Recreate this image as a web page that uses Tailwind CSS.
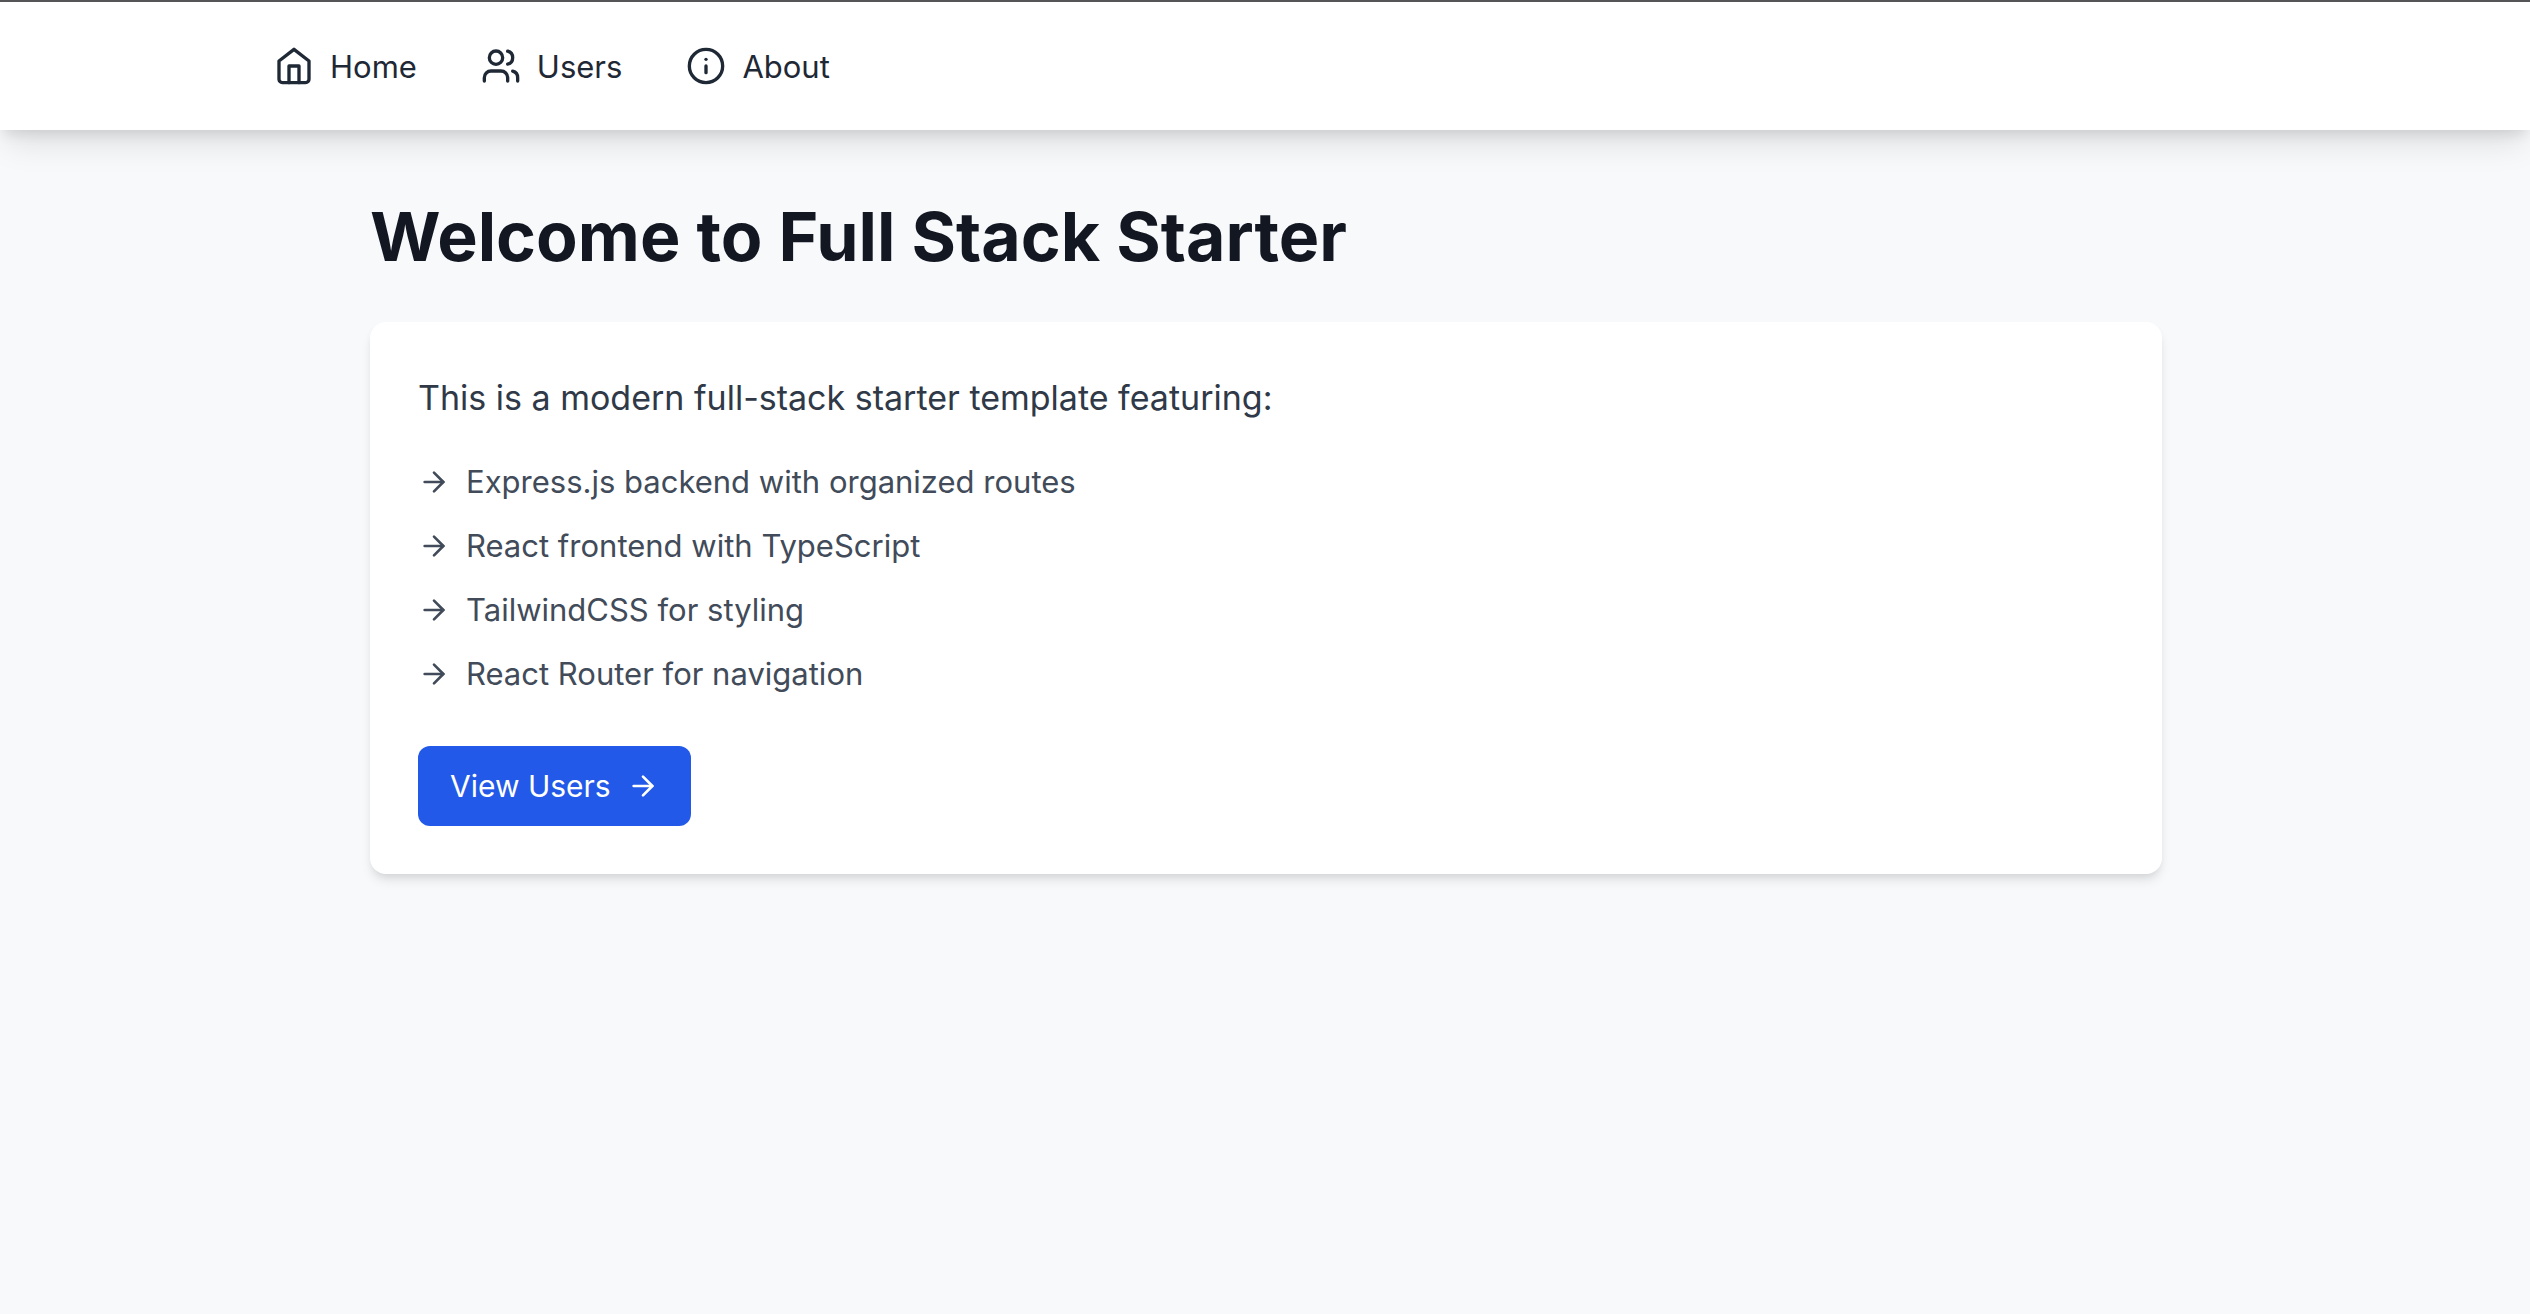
<!DOCTYPE html>
<html lang="en">
<head>
<meta charset="utf-8">
<title>Full Stack Starter</title>
<script src="https://cdn.jsdelivr.net/npm/@tailwindcss/browser@4"></script>
</head>
<body class="min-h-screen border-t-2 border-[#555456] bg-[#f8f9fb] font-['Inter',sans-serif] text-[31px] leading-[48px]">
<nav class="bg-white shadow-[0_20px_30px_-6px_rgb(0_0_0/0.1),0_8px_12px_-4px_rgb(0_0_0/0.1)]">
  <div class="mx-auto flex h-32 max-w-[2050px] items-center gap-16 pr-8 pl-[34px] text-[#1f2835]">
    <a href="#" class="flex items-center gap-4">
      <svg class="size-10" viewBox="0 0 24 24" fill="none" stroke="currentColor" stroke-width="2" stroke-linecap="round" stroke-linejoin="round"><path d="m3 9 9-7 9 7v11a2 2 0 0 1-2 2H5a2 2 0 0 1-2-2z"/><path d="M9 22V12h6v10"/></svg>
      <span class="pt-0.5">Home</span>
    </a>
    <a href="#" class="flex items-center gap-4">
      <svg class="size-10" viewBox="0 0 24 24" fill="none" stroke="currentColor" stroke-width="2" stroke-linecap="round" stroke-linejoin="round"><path d="M16 21v-2a4 4 0 0 0-4-4H6a4 4 0 0 0-4 4v2"/><circle cx="9" cy="7" r="4"/><path d="M22 21v-2a4 4 0 0 0-3-3.87"/><path d="M16 3.13a4 4 0 0 1 0 7.75"/></svg>
      <span class="pt-0.5">Users</span>
    </a>
    <a href="#" class="flex items-center gap-4">
      <svg class="size-10" viewBox="0 0 24 24" fill="none" stroke="currentColor" stroke-width="2" stroke-linecap="round" stroke-linejoin="round"><circle cx="12" cy="12" r="10"/><path d="M12 16v-4"/><path d="M12 8h.01"/></svg>
      <span class="pt-0.5">About</span>
    </a>
  </div>
</nav>
<main class="mx-auto max-w-[1794px] py-16 pl-0.5">
  <h1 class="mb-11 text-[68px] leading-[84px] font-bold text-[#131722]">Welcome to Full Stack Starter</h1>
  <div class="rounded-2xl bg-white p-12 shadow-[0_8px_12px_-2px_rgb(0_0_0/0.1),0_4px_8px_-4px_rgb(0_0_0/0.1)]">
    <p class="mb-8 text-[34px] leading-[56px] text-[#2f3947]">This is a modern full-stack starter template featuring:</p>
    <ul class="mb-12 flex flex-col gap-4 text-[#414b59]">
      <li class="flex items-center gap-4"><svg class="size-8" viewBox="0 0 24 24" fill="none" stroke="currentColor" stroke-width="2" stroke-linecap="round" stroke-linejoin="round"><path d="M5 12h14"/><path d="m12 5 7 7-7 7"/></svg>Express.js backend with organized routes</li>
      <li class="flex items-center gap-4"><svg class="size-8" viewBox="0 0 24 24" fill="none" stroke="currentColor" stroke-width="2" stroke-linecap="round" stroke-linejoin="round"><path d="M5 12h14"/><path d="m12 5 7 7-7 7"/></svg>React frontend with TypeScript</li>
      <li class="flex items-center gap-4"><svg class="size-8" viewBox="0 0 24 24" fill="none" stroke="currentColor" stroke-width="2" stroke-linecap="round" stroke-linejoin="round"><path d="M5 12h14"/><path d="m12 5 7 7-7 7"/></svg>TailwindCSS for styling</li>
      <li class="flex items-center gap-4"><svg class="size-8" viewBox="0 0 24 24" fill="none" stroke="currentColor" stroke-width="2" stroke-linecap="round" stroke-linejoin="round"><path d="M5 12h14"/><path d="m12 5 7 7-7 7"/></svg>React Router for navigation</li>
    </ul>
    <a href="#" class="flex w-fit items-center gap-4 rounded-xl bg-[#2359e8] px-8 py-4 text-[30px] leading-[48px] text-white">View Users<svg class="size-8" viewBox="0 0 24 24" fill="none" stroke="currentColor" stroke-width="2" stroke-linecap="round" stroke-linejoin="round"><path d="M5 12h14"/><path d="m12 5 7 7-7 7"/></svg></a>
  </div>
</main>
</body>
</html>
